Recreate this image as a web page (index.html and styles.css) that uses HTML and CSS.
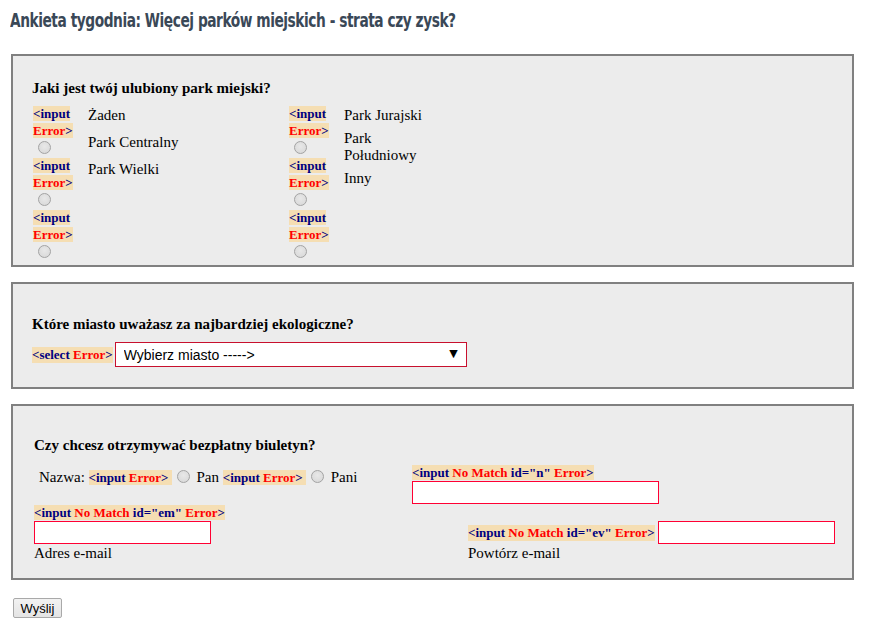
FILE: index.html
```
<!DOCTYPE html>
<html lang="pl">
<head>
<meta charset="utf-8">
<title>Ankieta tygodnia</title>
<link rel="stylesheet" href="styles.css">
</head>
<body>
<h1 class="title"><span class="title-text">Ankieta tygodnia: Więcej parków miejskich - strata czy zysk?</span></h1>
<form class="survey">
  <div class="box box-parks">
    <div class="q">Jaki jest twój ulubiony park miejski?</div>
    <div class="parks">
      <div class="pcol pcol-left">
        <div class="rcol">
          <div class="rgroup"><span class="chip">&lt;input <span class="err">Error</span>&gt;</span><input class="radio" type="radio" name="park"></div>
          <div class="rgroup"><span class="chip">&lt;input <span class="err">Error</span>&gt;</span><input class="radio" type="radio" name="park"></div>
          <div class="rgroup"><span class="chip">&lt;input <span class="err">Error</span>&gt;</span><input class="radio" type="radio" name="park"></div>
        </div>
        <div class="lcol lcol-wide">
          <div class="lbl">Żaden</div>
          <div class="lbl">Park Centralny</div>
          <div class="lbl">Park Wielki</div>
        </div>
      </div>
      <div class="pcol pcol-right">
        <div class="rcol">
          <div class="rgroup"><span class="chip">&lt;input <span class="err">Error</span>&gt;</span><input class="radio" type="radio" name="park"></div>
          <div class="rgroup"><span class="chip">&lt;input <span class="err">Error</span>&gt;</span><input class="radio" type="radio" name="park"></div>
          <div class="rgroup"><span class="chip">&lt;input <span class="err">Error</span>&gt;</span><input class="radio" type="radio" name="park"></div>
        </div>
        <div class="lcol lcol-narrow">
          <div class="lbl">Park Jurajski</div>
          <div class="lbl">Park Południowy</div>
          <div class="lbl">Inny</div>
        </div>
      </div>
    </div>
  </div>

  <div class="box box-city">
    <div class="q">Które miasto uważasz za najbardziej ekologiczne?</div>
    <div class="select-row">
      <span class="chip">&lt;select <span class="err">Error</span>&gt;</span>
      <div class="select-wrap">
        <select class="select"><option>Wybierz miasto -----&gt;</option></select>
        <span class="arrow">▼</span>
      </div>
    </div>
  </div>

  <div class="box box-news">
    <div class="q">Czy chcesz otrzymywać bezpłatny biuletyn?</div>
    <div class="row row-1">
      <div class="cell cell-name">Nazwa: <span class="chip">&lt;input <span class="err">Error</span>&gt; </span><input class="radio radio-inline" type="radio" name="pan"> Pan <span class="chip">&lt;input <span class="err">Error</span>&gt; </span><input class="radio radio-inline" type="radio" name="pan"> Pani</div>
      <div class="cell cell-n">
        <span class="chip">&lt;input <span class="err">No Match</span> id="n" <span class="err">Error</span>&gt;</span>
        <input class="text text-wide" type="text">
      </div>
    </div>
    <div class="row row-2">
      <div class="cell cell-em">
        <span class="chip">&lt;input <span class="err">No Match</span> id="em" <span class="err">Error</span>&gt;</span>
        <input class="text text-block" type="text">
        <div class="under">Adres e-mail</div>
      </div>
      <div class="cell cell-ev">
        <div class="ev-line"><span class="chip">&lt;input <span class="err">No Match</span> id="ev" <span class="err">Error</span>&gt;</span><input class="text" type="text"></div>
        <div class="under">Powtórz e-mail</div>
      </div>
    </div>
  </div>

  <button class="send" type="button">Wyślij</button>
</form>
</body>
</html>
```

FILE: styles.css
```
html, body {
  margin: 0;
  padding: 0;
  background: #ffffff;
}
body {
  padding: 0 0 0 11px;
  font-family: "Liberation Serif", "Times New Roman", serif;
  font-size: 15px;
  color: #000;
}
.title {
  margin: 0;
  padding: 8px 0 0 0;
  height: 54px;
  box-sizing: border-box;
  font-family: "DejaVu Sans", sans-serif;
  font-stretch: condensed;
  font-weight: bold;
  font-size: 20px;
  line-height: 24px;
  color: #3a4857;
  white-space: nowrap;
}
.title-text {
  display: inline-block;
  margin-left: -1px;
  letter-spacing: -0.6px;
  transform: scaleX(0.765);
  transform-origin: left center;
}
.survey {
  width: 843px;
}
.box {
  box-sizing: border-box;
  border: 2px solid #808080;
  background: #ececec;
  padding: 0 0 0 19px;
  margin-bottom: 15px;
}
.q {
  font-weight: bold;
  font-size: 15px;
  line-height: 17px;
}
.chip {
  background: #f5deb3;
  color: #000080;
  font-weight: bold;
  font-size: 13px;
}
.err {
  color: #ff0000;
}

/* box 1 */
.box-parks {
  height: 213px;
  padding-top: 24px;
}
.parks {
  display: flex;
  margin-top: 8px;
}
.pcol {
  display: flex;
  gap: 13px;
}
.pcol-left {
  width: 256px;
}
.rcol {
  width: 42px;
  padding-left: 1px;
}
.rgroup {
  line-height: 17px;
  height: 52px;
}
.radio {
  appearance: none;
  -webkit-appearance: none;
  display: block;
  width: 13px;
  height: 13px;
  margin: 2px 0 0 5px;
  border: 1px solid #a3a3a3;
  border-radius: 50%;
  background: radial-gradient(circle at 50% 40%, #e8e8e8 0%, #d6d6d6 100%);
  box-sizing: border-box;
}
.lcol {
  display: flex;
  flex-direction: column;
  margin-top: 2px;
  line-height: 17px;
}
.lcol-wide {
  gap: 10px;
}
.lcol-narrow {
  width: 92px;
  gap: 6px;
}

/* box 2 */
.box-city {
  height: 107px;
  padding-top: 32px;
}
.select-row {
  display: flex;
  align-items: center;
  gap: 2px;
  margin-top: 9px;
}
.select-wrap {
  position: relative;
  width: 352px;
  height: 25px;
}
.select {
  appearance: none;
  -webkit-appearance: none;
  width: 100%;
  height: 100%;
  margin: 0;
  border: 1px solid #c8102e;
  border-radius: 0;
  background: #fff;
  font-family: "Liberation Sans", Arial, sans-serif;
  font-size: 14px;
  color: #000;
  padding: 0 0 0 8px;
  outline: none;
}
.arrow {
  position: absolute;
  right: 9px;
  top: 5px;
  font-family: "DejaVu Sans", sans-serif;
  font-size: 11px;
  line-height: 14px;
  color: #000;
  pointer-events: none;
}

/* box 3 */
.box-news {
  height: 176px;
  padding-top: 31px;
  padding-left: 21px;
}
.row {
  display: flex;
}
.row-1 {
  margin-top: 10px;
  align-items: flex-start;
}
.cell-name {
  width: 373px;
  padding-left: 5px;
  margin-top: 5px;
  line-height: 17px;
  white-space: nowrap;
}
.radio-inline {
  display: inline-block;
  vertical-align: -1px;
  margin: 0 3px 0 5px;
}
.cell-n {
  line-height: 16px;
}
.text {
  box-sizing: border-box;
  width: 177px;
  height: 23px;
  margin: 0;
  border: 1px solid #ff0033;
  background: #fff;
  padding: 0;
  vertical-align: middle;
}
.text-wide {
  display: block;
  width: 247px;
}
.text-block {
  display: block;
}
.row-2 {
  margin-top: 0;
  align-items: flex-end;
}
.cell-em {
  width: 434px;
  line-height: 16px;
}
.under {
  line-height: 18px;
}
.ev-line {
  display: flex;
  align-items: center;
  gap: 3px;
}

/* button */
.send {
  margin: 3px 0 0 2px;
  width: 49px;
  height: 20px;
  padding: 0;
  font-family: "Liberation Sans", Arial, sans-serif;
  font-size: 13px;
  color: #000;
  background: linear-gradient(#f2f2f2, #e4e4e4);
  border: 1px solid #a9a9a9;
  border-radius: 2px;
}
```
